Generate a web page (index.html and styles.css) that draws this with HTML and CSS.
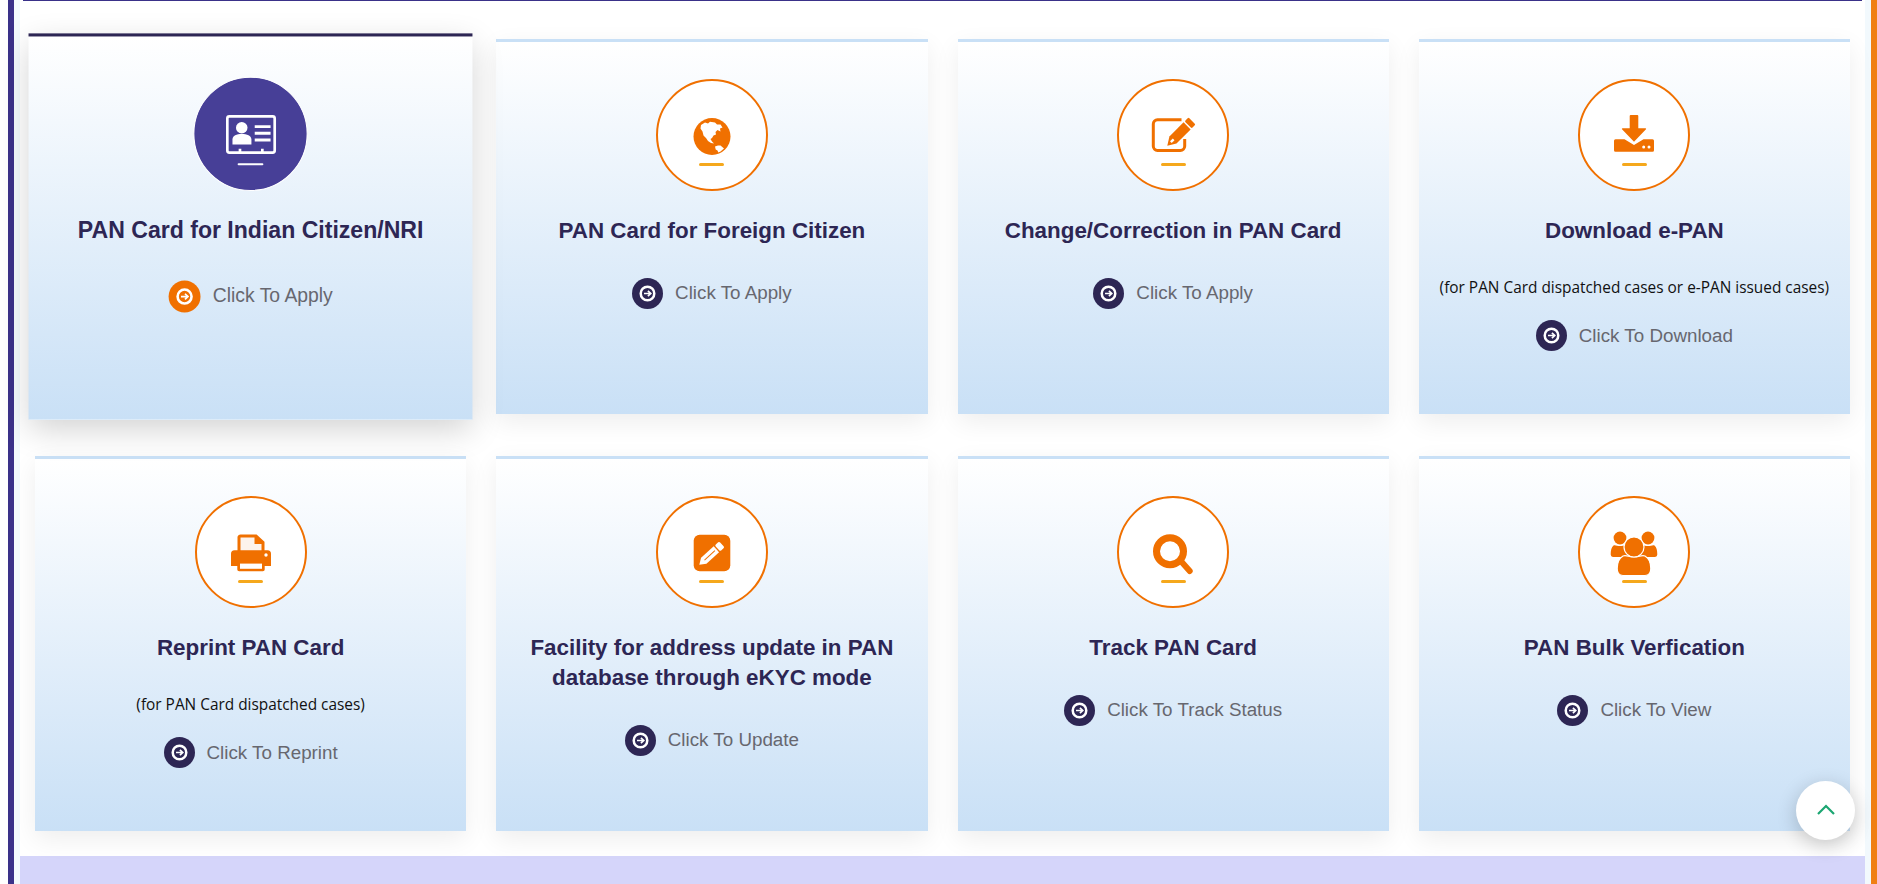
FILE: index.html
```html
<!DOCTYPE html>
<html>
    <head>
        <meta charset="utf-8">
        <title>PAN Services</title>
        <link rel="stylesheet" href="styles.css">
    </head>
    <body>
        <svg class="defs" width="0" height="0">
            <symbol id="go" viewBox="0 0 32 32">
                <circle cx="16" cy="16" r="7" fill="none" stroke="#fff" stroke-width="2.6"/>
                <path d="M12.4 16H19M16.4 13.2L19.4 16L16.4 18.8" fill="none" stroke="#fff" stroke-width="1.7"/>
            </symbol>
        </svg>
        <div class="frame">
            <div class="main">
                <div class="topLine"></div>
                <div class="cardGrid">
                    <div class="card cardActive">
                        <div class="iconCircle">
                            <svg class="icon" viewBox="0 0 60 48">
                                <rect x="7" y="4.6" width="46" height="35.2" rx="2" fill="none" stroke="#fff" stroke-width="2.6"/>
                                <circle cx="21" cy="15.6" r="5.6" fill="#fff"/>
                                <path d="M12 31.8V27C12 23 16 21.6 21 21.6S30.4 23 30.4 27V31.8Z" fill="#fff"/>
                                <path d="M33.6 14.5H49M33.6 21H49M33.6 27.5H49" stroke="#fff" stroke-width="2.8"/>
                                <path d="M19.3 36V39.8M41 36V39.8" stroke="#fff" stroke-width="2.6"/>
                            </svg>
                            <span class="iconBar"></span>
                        </div>
                        <h3 class="cardTitle">PAN Card for Indian Citizen/NRI</h3>
                        <a class="cardLink"><span class="goDot"><svg><use href="#go"/></svg></span>Click To Apply</a>
                    </div>
                    <div class="card">
                        <div class="iconCircle">
                            <svg class="icon" viewBox="0 0 60 48">
                                <circle cx="30" cy="23.5" r="18.5" fill="#f07000"/>
                                <path d="M19 12L23 9.5L26 10.5L28 8.8L33 9.5L35 11.5L38.5 11.5L40.5 14.5L38 15.5L38.5 18.5L35.5 17L33.5 19L34 21.5L31.5 22.5L30 25L28.5 26L30 28.5L32 30.5L29 30L26 28L24 25L21.5 22.5L20.5 18.5L18.5 15.5Z" fill="#fff"/>
                                <path d="M33 33.4L36 32.4L38.5 32.6L42 35.5L38.5 38.5L36.3 39.5L35.5 37.5L33.7 36.4Z" fill="#fff"/>
                            </svg>
                            <span class="iconBar"></span>
                        </div>
                        <h3 class="cardTitle">PAN Card for Foreign Citizen</h3>
                        <a class="cardLink"><span class="goDot"><svg><use href="#go"/></svg></span>Click To Apply</a>
                    </div>
                    <div class="card">
                        <div class="iconCircle">
                            <svg class="icon" viewBox="0 0 60 48">
                                <path d="M38.5 6.7H14.5A4.4 4.4 0 0 0 10.3 11V33.2A4.4 4.4 0 0 0 14.5 37.4H37.4A4.4 4.4 0 0 0 41.7 33.2V26" fill="none" stroke="#f07000" stroke-width="3"/>
                                <g transform="translate(24.3 32.7) rotate(-45)" fill="#f07000">
                                    <path d="M0 0L8 -5H28V5H8Z"/>
                                    <rect x="29.5" y="-5" width="5.5" height="10" rx="1.2"/>
                                    <path d="M5 -1.2H9V1.2H5Z" fill="#fff"/>
                                </g>
                            </svg>
                            <span class="iconBar"></span>
                        </div>
                        <h3 class="cardTitle">Change/Correction in PAN Card</h3>
                        <a class="cardLink"><span class="goDot"><svg><use href="#go"/></svg></span>Click To Apply</a>
                    </div>
                    <div class="card">
                        <div class="iconCircle">
                            <svg class="icon" viewBox="0 0 60 48">
                                <path d="M25.7 3A1 1 0 0 1 26.7 2H33.3A1 1 0 0 1 34.3 3V15.3H41.5A.6.6 0 0 1 42 16.3L30 28.7L18 16.3A.6.6 0 0 1 18.5 15.3H25.7Z" fill="#f07000"/>
                                <path d="M11.5 26.3H20.5L30 32L39.5 26.3H48.5A1.5 1.5 0 0 1 50 27.8V37.2A1.5 1.5 0 0 1 48.5 38.7H11.5A1.5 1.5 0 0 1 10 37.2V27.8A1.5 1.5 0 0 1 11.5 26.3Z" fill="#f07000"/>
                                <circle cx="39.7" cy="34" r="1.5" fill="#fff"/>
                                <circle cx="45" cy="34" r="1.5" fill="#fff"/>
                            </svg>
                            <span class="iconBar"></span>
                        </div>
                        <h3 class="cardTitle">Download e-PAN</h3>
                        <p class="cardNote">(for PAN Card dispatched cases or e-PAN issued cases)</p>
                        <a class="cardLink"><span class="goDot"><svg><use href="#go"/></svg></span>Click To Download</a>
                    </div>
                    <div class="card">
                        <div class="iconCircle">
                            <svg class="icon" viewBox="0 0 60 48">
                                <path d="M18 22V7A1.6 1.6 0 0 1 19.6 6H35L42 12.5V22" fill="#fdf3ec" stroke="#f07000" stroke-width="3"/>
                                <path d="M34.5 6V13H42" fill="#f07000" stroke="#f07000" stroke-width="2"/>
                                <path d="M13.5 20.3H46.5A3.5 3.5 0 0 1 50 23.8V36H10V23.8A3.5 3.5 0 0 1 13.5 20.3Z" fill="#f07000"/>
                                <circle cx="45" cy="25" r="1.7" fill="#fff"/>
                                <path d="M16.3 31H43.7V39.5A1.8 1.8 0 0 1 41.9 41.3H18.1A1.8 1.8 0 0 1 16.3 39.5Z" fill="#f07000"/>
                                <path d="M19 33.6H41V38.8H19Z" fill="#fff"/>
                            </svg>
                            <span class="iconBar"></span>
                        </div>
                        <h3 class="cardTitle">Reprint PAN Card</h3>
                        <p class="cardNote">(for PAN Card dispatched cases)</p>
                        <a class="cardLink"><span class="goDot"><svg><use href="#go"/></svg></span>Click To Reprint</a>
                    </div>
                    <div class="card">
                        <div class="iconCircle">
                            <svg class="icon" viewBox="0 0 60 48">
                                <rect x="11.7" y="4.7" width="36.6" height="36.6" rx="6" fill="#f07000"/>
                                <g transform="translate(17.3 34.7) rotate(-42)" fill="#fff">
                                    <path d="M0 0L6 -4H23V4H6Z"/>
                                    <rect x="24.4" y="-4" width="6" height="8" rx="1.4"/>
                                    <path d="M7 -.5H21V.5H7Z" fill="#f07000"/>
                                </g>
                            </svg>
                            <span class="iconBar"></span>
                        </div>
                        <h3 class="cardTitle">Facility for address update in PAN database through eKYC mode</h3>
                        <a class="cardLink"><span class="goDot"><svg><use href="#go"/></svg></span>Click To Update</a>
                    </div>
                    <div class="card">
                        <div class="iconCircle">
                            <svg class="icon" viewBox="0 0 60 48">
                                <circle cx="27" cy="21.3" r="13.5" fill="none" stroke="#f07000" stroke-width="7"/>
                                <path d="M38.7 32L46.7 41" stroke="#f07000" stroke-width="6" stroke-linecap="round"/>
                            </svg>
                            <span class="iconBar"></span>
                        </div>
                        <h3 class="cardTitle">Track PAN Card</h3>
                        <a class="cardLink"><span class="goDot"><svg><use href="#go"/></svg></span>Click To Track Status</a>
                    </div>
                    <div class="card">
                        <div class="iconCircle">
                            <svg class="icon" viewBox="0 0 60 48">
                                <circle cx="16" cy="8" r="6.4" fill="#f07000"/>
                                <circle cx="44" cy="8" r="6.4" fill="#f07000"/>
                                <path d="M9.5 15.5C11 14.5 13 16 16 16S21 14.5 23 15.5L24 27H9A2.5 2.5 0 0 1 6.7 24.5C6.7 20 7.5 17 9.5 15.5Z" fill="#f07000"/>
                                <path d="M50.5 15.5C49 14.5 47 16 44 16S39 14.5 37 15.5L36 27H51A2.5 2.5 0 0 0 53.3 24.5C53.3 20 52.5 17 50.5 15.5Z" fill="#f07000"/>
                                <path d="M19 26C22 24.6 25 27 30 27S38 24.6 41 26C44.5 28 46.8 33 46.8 38.5C46.8 43 45 45.5 41 45.5H19C15 45.5 13.2 43 13.2 38.5C13.2 33 15.5 28 19 26Z" fill="#f07000" stroke="#fff" stroke-width="1.2"/>
                                <circle cx="30" cy="17" r="10" fill="#f07000" stroke="#fff" stroke-width="1.2"/>
                            </svg>
                            <span class="iconBar"></span>
                        </div>
                        <h3 class="cardTitle">PAN Bulk Verfication</h3>
                        <a class="cardLink"><span class="goDot"><svg><use href="#go"/></svg></span>Click To View</a>
                    </div>
                </div>
                <div class="bottomBand"></div>
            </div>
        </div>
        <button class="toTop">
            <svg width="18" height="11" viewBox="0 0 18 11"><path d="M1 10L9 2L17 10" fill="none" stroke="#1ba672" stroke-width="2.2"/></svg>
        </button>
    </body>
</html>
```

FILE: styles.css
```css
html, body {
    margin: 0;
    height: 100%;
    overflow: hidden;
    background: #fff;
}
body {
    padding-left: 8px;
    font-family: "Liberation Sans", sans-serif;
}
.defs {
    display: block;
    height: 0;
}
.frame {
    border-left: 6px solid #3a3189;
    border-right: 6px solid #f07f13;
    background: #f2f9fd;
    padding: 0 6px;
    height: 884px;
}
.main {
    background: #fff;
    height: 884px;
}
.topLine {
    height: 1px;
    margin: 0 3px;
    background: #3a3189;
}
.cardGrid {
    display: grid;
    grid-template-columns: repeat(4, 1fr);
    row-gap: 42px;
    padding-top: 38px;
    padding-bottom: 25px;
}
.card {
    box-sizing: border-box;
    height: 375px;
    margin: 0 15px;
    padding-top: 37px;
    border-top: 3px solid #c9e0f6;
    background: linear-gradient(to bottom, #fff, #c9e0f6);
    box-shadow: 0 8px 24px rgba(0, 0, 0, 0.07);
    text-align: center;
}
.cardActive {
    position: relative;
    transform: scale(1.03);
    border-top-color: #2d2654;
    box-shadow: 0 10px 30px rgba(0, 0, 0, 0.18);
}
.iconCircle {
    box-sizing: border-box;
    width: 112px;
    height: 112px;
    margin: 0 auto;
    padding-top: 32px;
    border: 2px solid #f07000;
    border-radius: 50%;
    background: #fff;
}
.cardActive .iconCircle {
    width: 111.4px;
    height: 111.4px;
    margin-top: 1.6px;
    margin-bottom: -1px;
    padding-top: 33px;
    border: 1px solid #fff;
    background: #473f97;
}
.icon {
    display: block;
    width: 60px;
    height: 48px;
    margin: 0 auto;
}
.iconBar {
    display: block;
    width: 25px;
    height: 3px;
    margin: 2px auto 0;
    border-radius: 2px;
    background: #f5a81c;
}
.cardActive .iconBar {
    height: 2px;
    background: #fff;
}
.cardTitle {
    margin: 25px 20px 31px;
    font-size: 22.4px;
    line-height: 30px;
    font-weight: bold;
    color: #2d2654;
}
.cardNote {
    margin: -0.5px 0 22px;
    font-family: "Open Sans", sans-serif;
    font-size: 15.4px;
    line-height: 21px;
    color: #111;
}
.cardLink {
    display: inline-flex;
    align-items: center;
    gap: 12px;
    height: 32px;
    font-size: 18.8px;
    color: #67676f;
}
.cardActive .cardLink {
    margin-top: 1.5px;
}
.goDot {
    display: block;
    width: 31px;
    height: 31px;
    border-radius: 50%;
    background: #2d2654;
}
.goDot svg {
    display: block;
    width: 100%;
    height: 100%;
}
.cardActive .goDot {
    background: #f07000;
}
.bottomBand {
    height: 28px;
    background: #d5d5fa;
}
.toTop {
    position: fixed;
    right: 22px;
    bottom: 44px;
    width: 59px;
    height: 59px;
    padding: 0;
    border: 0;
    border-radius: 50%;
    background: #fff;
    box-shadow: 0 5px 20px rgba(0, 0, 0, 0.2);
}
```
